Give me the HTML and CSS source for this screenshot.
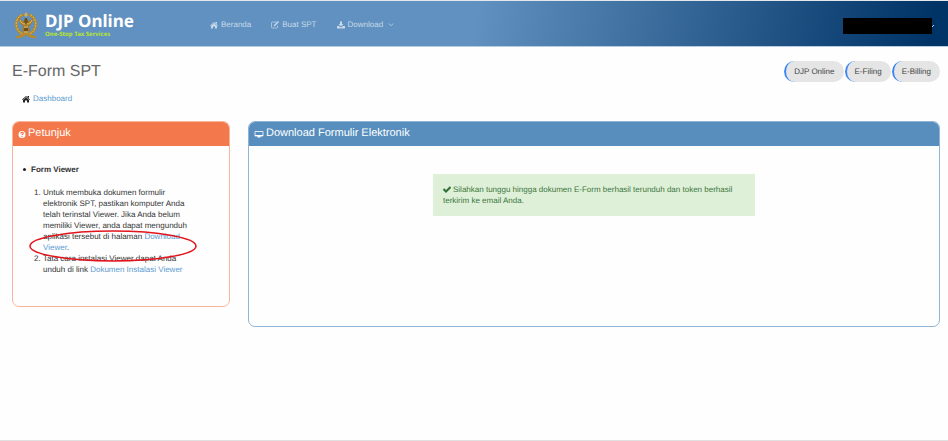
FILE: index.html
```html
<!DOCTYPE html>
<html lang="id">
<head>
<meta charset="utf-8">
<meta name="viewport" content="width=device-width, initial-scale=1">
<title>DJP Online</title>
<link rel="stylesheet" href="styles.css">
</head>
<body>
<header class="topbar">
  <a class="brand" href="#">
    <svg class="crest" viewBox="0 0 24 28" aria-hidden="true">
      <g fill="none" stroke="#b58a2f" stroke-linecap="round">
        <path stroke-width="3" d="M8 4C3 7 1 12 3 17c1 3 3 5 6 6M16 4c5 3 7 8 5 13-1 3-3 5-6 6"/>
        <path stroke-width="2.6" d="M3 26c4 0 7-2 9-4 2 2 5 4 9 4"/>
        <path stroke="#e0bd60" stroke-width="1" stroke-dasharray="1 2" d="M7 4C3 7 1 12 3 17c1 3 3 5 6 6M17 4c4 3 6 8 4 13-1 3-3 5-6 6"/>
      </g>
      <path fill="#d6ad4b" d="M12 1l2 3-2 2-2-2z"/>
      <path fill="#a57b2c" d="M5 7c2 1 3 3 5 3l1-3h2l1 3c2 0 3-2 5-3 0 5-2 7-4 8l1 5-4 2-4-2 1-5C7 14 5 12 5 7z"/>
      <path fill="#6f4f1c" d="M11 7h2l1 4-2 2-2-2zM10 17h4v3h-4z"/>
      <path fill="none" stroke="#e3bf62" stroke-width="1" d="M6 9c1 3 3 4 5 4m7-4c-1 3-3 4-5 4M10 16h4m-4 5h4"/>
    </svg>
    <span class="brand-text">
      <span class="brand-name">DJP Online</span>
      <span class="brand-tag">One-Stop Tax Services</span>
    </span>
  </a>
  <nav class="menu">
    <a href="#"><svg class="icon" viewBox="0 0 16 16" aria-hidden="true"><path fill="currentColor" d="M8 2l8 7-1 1-7-6-7 6-1-1zM11 2h3v4l-3-2zM8 5l6 5v5h-4v-4H6v4H2v-5z"/></svg>Beranda</a>
    <a href="#"><svg class="icon" viewBox="0 0 16 16" aria-hidden="true"><path fill="none" stroke="currentColor" stroke-width="1.4" d="M11 2H3a2 2 0 0 0-2 2v8a2 2 0 0 0 2 2h8a2 2 0 0 0 2-2V9"/><path fill="currentColor" d="M14 0l2 2-8 8-3 1 1-3z"/></svg>Buat SPT</a>
    <a href="#"><svg class="icon" viewBox="0 0 16 16" aria-hidden="true"><path fill="currentColor" d="M6 1h4v5h3L8 11 3 6h3zM0 10h4l4 3 4-3h4v5H0z"/></svg>Download<svg class="caret" viewBox="0 0 8 8" aria-hidden="true"><path fill="none" stroke="currentColor" d="M1 2l3 3 3-3"/></svg></a>
  </nav>
  <button class="account" type="button" aria-label="Akun"><span class="account-name"></span><svg class="tick" viewBox="0 0 3 6" aria-hidden="true"><path fill="none" stroke="currentColor" d="M0 4l2-2"/></svg></button>
</header>
<main class="page">
  <div class="page-head">
    <h1>E-Form SPT</h1>
    <nav class="pills">
      <a href="#">DJP Online</a>
      <a href="#">E-Filing</a>
      <a href="#">E-Billing</a>
    </nav>
  </div>
  <nav class="crumbs"><svg class="icon" viewBox="0 0 16 16" aria-hidden="true"><path fill="currentColor" d="M8 2l8 7-1 1-7-6-7 6-1-1zM11 2h3v4l-3-2zM8 5l6 5v5h-4v-4H6v4H2v-5z"/></svg><a href="#">Dashboard</a></nav>
  <div class="columns">
    <section class="panel guide">
      <h2><svg class="icon" viewBox="0 0 16 16" aria-hidden="true"><circle cx="8" cy="9" r="7" fill="#fff"/><path fill="none" stroke="#f3784b" stroke-width="2.2" d="M5.500 7.500c0-3.500 5-3.500 5-1 0 2-2.500 2-2.500 4M8 12v2"/></svg>Petunjuk</h2>
      <div class="guide-body">
        <ul><li>Form Viewer</li></ul>
        <ol>
          <li>Untuk membuka dokumen formulir elektronik SPT, pastikan komputer Anda telah terinstal Viewer. Jika Anda belum memiliki Viewer, anda dapat mengunduh aplikasi tersebut di halaman <a href="#">Download Viewer</a>.</li>
          <li>Tata cara instalasi Viewer dapat Anda unduh di link <a href="#">Dokumen Instalasi Viewer</a></li>
        </ol>
        <svg class="ring" viewBox="0 0 168 32" aria-hidden="true"><ellipse cx="84" cy="16" rx="83" ry="15" fill="none" stroke="#e3131b" stroke-width="1.500"/></svg>
      </div>
    </section>
    <section class="panel download">
      <h2><svg class="icon screen" viewBox="0 0 18 16" aria-hidden="true"><path fill="none" stroke="#fff" stroke-width="1.600" d="M1 3h16v9H1z"/><path fill="#fff" d="M1 10h16v2H1zM6 12h6v3H6z"/></svg>Download Formulir Elektronik</h2>
      <div class="download-body">
        <p class="notice" role="status"><svg class="icon" viewBox="0 0 16 16" aria-hidden="true"><path fill="none" stroke="#2f6f38" stroke-width="4" d="M1 8l5 5 9-9"/></svg>Silahkan tunggu hingga dokumen E-Form berhasil terunduh dan token berhasil terkirim ke email Anda.</p>
      </div>
    </section>
  </div>
</main>
</body>
</html>
```
FILE: styles.css
```css
* { box-sizing: border-box; }
body {
  margin: 0;
  min-height: 100vh;
  border-bottom: 1px solid #e0e0e0;
  background: #fefefe;
  color: #333;
  font: 8px/11px "Liberation Sans", Arial, sans-serif;
  text-rendering: geometricPrecision;
}
a { color: #5b9bd1; text-decoration: none; }
h1, h2, p, ul, ol { margin: 0; }
.icon { width: 8px; height: 8px; flex: none; }
.screen { width: 10px; }

.topbar {
  display: flex;
  align-items: center;
  height: 47px;
  padding: 2px 13px 0 14px;
  border-top: 1px solid #e4e8ea;
  border-bottom: 1px solid #b4cbe0;
  background: linear-gradient(100deg, #6091c0 0%, #6091c0 50%, #036 98%);
}
.brand { display: flex; align-items: center; gap: 7px; width: 196px; color: #fff; }
.crest { width: 24px; height: 28px; }
.brand-text { display: flex; flex-direction: column; }
.brand-name { font: bold 17px/18px "Noto Sans", sans-serif; }
.brand-tag { color: #b8e62e; font: bold 6px/8px "Noto Sans", sans-serif; }
.menu { display: flex; gap: 20px; }
.menu a { display: flex; align-items: center; gap: 3px; color: #c8daea; }
.caret { width: 6px; height: 6px; margin-left: 2px; }
.account {
  display: flex;
  align-items: center;
  margin-left: auto;
  margin-top: 2px;
  padding: 0;
  border: 0;
  background: none;
  color: #c0d4e8;
}
.account-name { width: 89px; height: 16px; background: #000; }
.tick { width: 3px; height: 6px; }

.page { padding: 14px 8px 0 12px; }
.page-head { display: flex; justify-content: space-between; align-items: center; }
h1 { color: #666; font-size: 16px; line-height: 20px; font-weight: 400; }
.pills { display: flex; gap: 1px; }
.pills a {
  padding: 5px 9px 5px 8px;
  border-left: 2px solid #3d85f5;
  border-radius: 11px;
  background: #e5e5e5;
  color: #444;
}
.crumbs { display: flex; align-items: center; gap: 3px; padding: 11px 10px 17px; color: #222; }
.columns { display: grid; grid-template-columns: 218fr 692fr; gap: 18px; align-items: start; }
.panel { overflow: hidden; border: 1px solid; border-radius: 7px; }
.panel h2 {
  display: flex;
  align-items: center;
  gap: 2px;
  padding: 4px 5px 5px;
  color: #fff;
  font-size: 11px;
  line-height: 15px;
  font-weight: 400;
}
.guide { border-color: #f9b49b; }
.guide h2 { background: #f3784b; }
.download { border-color: #8fb4d6; }
.download h2 { background: #578ebe; }
.guide-body { position: relative; padding: 18px 40px 31px 10px; }
.guide-body ul { padding: 0; list-style: none; font-weight: 700; }
.guide-body ul li { display: flex; align-items: center; gap: 5px; }
.guide-body ul li::before { content: ""; width: 3px; height: 3px; border-radius: 50%; background: #222; }
.guide-body ol { margin-top: 12px; padding-left: 20px; }
.ring { position: absolute; left: 16px; top: 84px; width: 168px; height: 32px; }
.download-body { padding: 28px 184px 110px; }
.notice { padding: 10px; background: #dff0d8; color: #3c763d; }
.notice .icon { margin-right: 2px; vertical-align: -1px; }
```
